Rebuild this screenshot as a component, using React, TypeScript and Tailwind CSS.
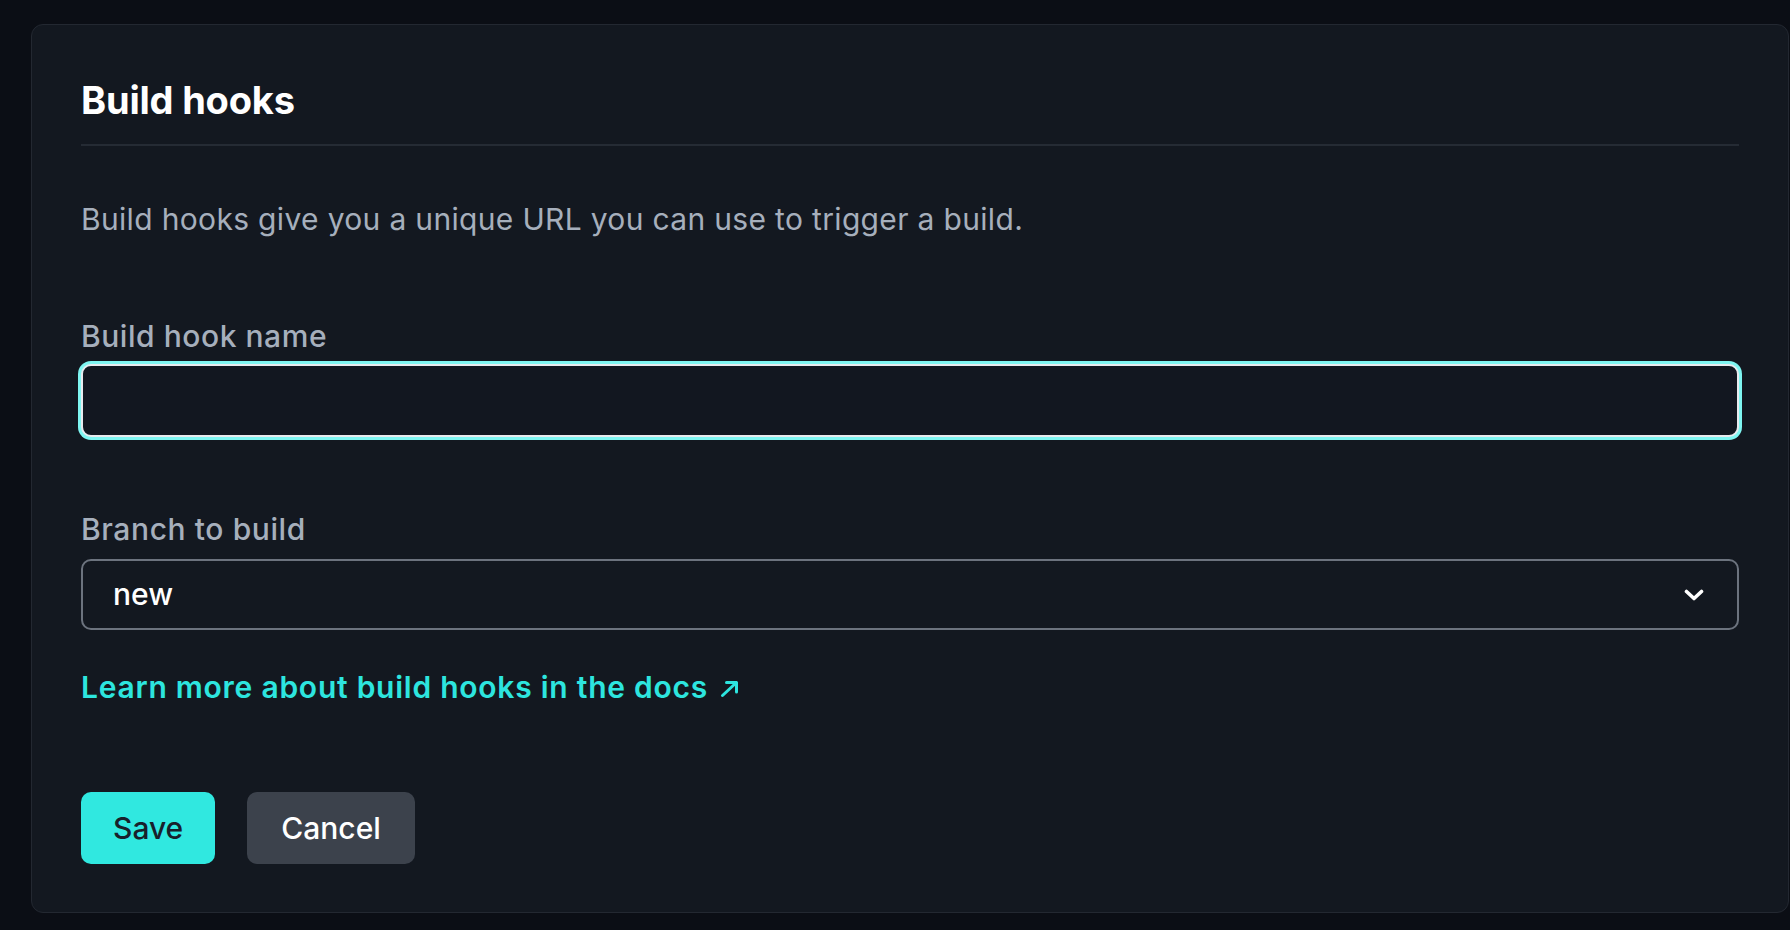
import { FC } from "react";

const ChevronDown: FC = () => (
  <svg width="20" height="12" viewBox="0 0 20 12" fill="none" className="shrink-0">
    <path
      d="M2.5 2.5L10 9.5L17.5 2.5"
      stroke="#ffffff"
      strokeWidth="3.6"
      strokeLinecap="round"
      strokeLinejoin="round"
    />
  </svg>
);

const ArrowUpRight: FC = () => (
  <svg width="20" height="18" viewBox="0 0 20 18" fill="none" className="ml-[12px] mt-[2px] shrink-0">
    <path
      d="M2.5 15.5L16.5 2.5M6.5 2.5H16.5V12"
      stroke="#2de5df"
      strokeWidth="3"
      strokeLinecap="round"
      strokeLinejoin="round"
    />
  </svg>
);

export default function App() {
  return (
    <div className="min-h-screen bg-[#0b0e15] pl-[31px] pr-[1px] pt-[24px] font-['Inter','Liberation_Sans',sans-serif]">
      <div className="rounded-[12px] border border-[#232831] bg-[#131820] px-[49px] pt-[52px] pb-[48px]">
        <h2 className="text-[38px] leading-[46px] font-bold text-white tracking-[-0.2px] pb-[21px] border-b-2 border-[#252b34]">
          Build hooks
        </h2>

        <p className="mt-[51px] text-[30px] leading-[45px] tracking-[0.33px] text-[#a6afbc]">
          Build hooks give you a unique URL you can use to trigger a build.
        </p>

        <label className="block mt-[72px] text-[30px] leading-[45px] tracking-[0.55px] font-medium text-[#a6afbc]">
          Build hook name
        </label>
        <input
          type="text"
          className="mt-[5px] block w-full h-[73px] rounded-[10px] border-2 border-[#e8eaee] bg-[#121720] px-[30px] text-[30px] text-white outline-none shadow-[0_0_0_3px_#7ef5f1]"
        />

        <label className="block mt-[70px] text-[30px] leading-[45px] tracking-[0.6px] font-medium text-[#a6afbc]">
          Branch to build
        </label>
        <div className="mt-[7px] flex items-center justify-between h-[71px] rounded-[10px] border-2 border-[#6c737e] pl-[30px] pr-[33px]">
          <span className="text-[30px] leading-[45px] font-medium text-white">new</span>
          <ChevronDown />
        </div>

        <a className="mt-[35px] flex items-center text-[30px] leading-[45px] tracking-[0.75px] font-semibold text-[#2de5df]">
          Learn more about build hooks in the docs
          <ArrowUpRight />
        </a>

        <div className="mt-[82px] flex gap-[32px]">
          <button className="h-[72px] px-[32px] rounded-[10px] bg-[#30e8e0] text-[30px] font-medium text-[#18202b]">
            Save
          </button>
          <button className="h-[72px] px-[34px] rounded-[10px] bg-[#3c424c] text-[30px] font-medium text-white">
            Cancel
          </button>
        </div>
      </div>
    </div>
  );
}
